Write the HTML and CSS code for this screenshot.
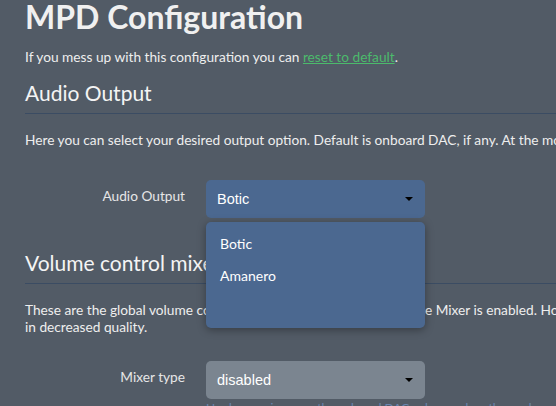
FILE: index.html
```html
<!DOCTYPE html>
<html>
<head>
<meta charset="utf-8">
<link rel="stylesheet" href="styles.css">
</head>
<body>
<div class="page">
  <h1 class="title">MPD Configuration</h1>
  <p class="lead">If you mess up with this configuration you can <a class="link" href="#">reset to default</a>.</p>

  <section class="group">
    <h2 class="legend">Audio Output</h2>
    <p class="text">Here you can select your desired output option. Default is onboard DAC, if any. At the moment Botic and Amanero are supported.</p>
    <div class="row">
      <label class="label">Audio Output</label>
      <div class="field">
        <div class="select select-blue"><span class="value">Botic</span><span class="caret"></span></div>
        <div class="menu">
          <div class="item">Botic</div>
          <div class="item">Amanero</div>
        </div>
      </div>
    </div>
  </section>

  <section class="group">
    <h2 class="legend">Volume control mixer</h2>
    <p class="text">These are the global volume control settings. It only works when the Mixer is enabled. However, software mixing results<br>in decreased quality.</p>
    <div class="row row-tight">
      <label class="label">Mixer type</label>
      <div class="field">
        <div class="select select-gray"><span class="value">disabled</span><span class="caret"></span></div>
        <span class="help">Hardware mixer: use the onboard DAC volume, when the card supports it.</span>
      </div>
    </div>
  </section>
</div>
</body>
</html>
```

FILE: styles.css
```css
html, body {
  margin: 0;
  padding: 0;
  overflow: hidden;
  background: #525b66;
}
body {
  font-family: Lato, "Open Sans", sans-serif;
  color: #eeeeee;
  width: 556px;
  height: 406px;
}
.page {
  width: 900px;
  padding-left: 25px;
}
.title {
  margin: 0 0 13px 0;
  font-size: 32px;
  line-height: 34px;
  font-weight: 700;
  color: #f0f0f0;
}
.lead {
  margin: 0;
  font-size: 13.7px;
  line-height: 20px;
}
.link {
  color: #4cba6c;
  text-decoration: underline;
}
.legend {
  margin: 13px 0 0 0;
  padding-bottom: 7px;
  border-bottom: 1px solid #3b4c63;
  font-size: 21px;
  line-height: 26px;
  font-weight: 400;
  color: #f4f4f4;
  white-space: nowrap;
}
.text {
  margin: 17px 0 0 0;
  font-size: 13.7px;
  line-height: 17.5px;
  color: #eeeeee;
  white-space: nowrap;
}
.row {
  display: flex;
  align-items: flex-start;
  margin-top: 31px;
  margin-bottom: 32px;
}
.row-tight {
  margin-top: 25px;
}
.label {
  width: 160px;
  text-align: right;
  font-size: 13.7px;
  line-height: 32px;
  color: #e6e6e6;
  flex: none;
}
.field {
  position: relative;
  margin-left: 21px;
  width: 219px;
}
.select {
  height: 38px;
  border-radius: 5px;
  display: flex;
  align-items: center;
  justify-content: space-between;
  padding: 0 12px 0 11px;
  box-sizing: border-box;
  font-family: "Liberation Sans", Arial, sans-serif;
  font-size: 14.5px;
  color: #ffffff;
}
.select-blue {
  background: #4b6890;
}
.select-gray {
  background: #7b8590;
}
.caret {
  width: 0;
  height: 0;
  border-left: 4px solid transparent;
  border-right: 4px solid transparent;
  border-top: 4px solid #000;
}
.menu {
  position: absolute;
  left: 0;
  top: 42px;
  width: 219px;
  height: 106px;
  box-sizing: border-box;
  background: #4b6890;
  border-radius: 5px;
  padding-top: 6px;
  box-shadow: 0 2px 8px rgba(0, 0, 0, 0.35);
  z-index: 10;
}
.item {
  padding: 0 14px;
  height: 32px;
  line-height: 32px;
  font-size: 14px;
  color: #ffffff;
}
.help {
  display: block;
  margin-top: 1px;
  font-size: 12px;
  line-height: 16px;
  color: #6a86b0;
  white-space: nowrap;
}
```
